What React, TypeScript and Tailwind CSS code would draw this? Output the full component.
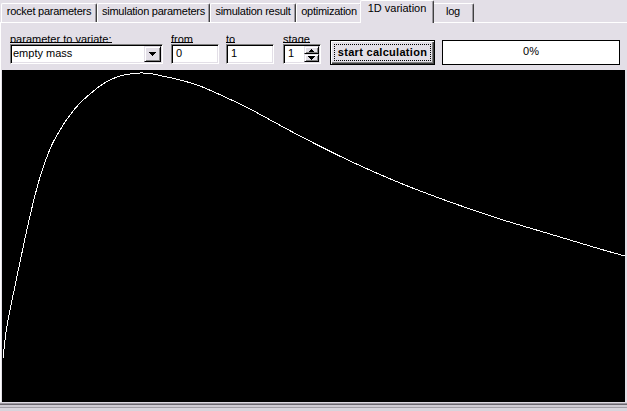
import React from "react";

type Tab = { label: string; cls: string; active?: boolean };

const tabs: Tab[] = [
  { label: "rocket parameters", cls: "w-[96px]" },
  { label: "simulation parameters", cls: "w-[113px]" },
  { label: "simulation result", cls: "w-[86px]" },
  { label: "optimization", cls: "w-[66px]" },
  { label: "1D variation", cls: "w-[74px]", active: true },
  { label: "log", cls: "w-[42px]" },
];

const samples: [number, number][] = [
  [3, 358], [6, 332], [10, 310], [20, 262], [30, 216], [40, 177], [50, 149],
  [60, 130], [70, 115], [80, 103], [90, 94], [100, 86], [110, 80], [120, 76],
  [130, 74], [140, 73], [150, 73.5], [160, 75.5], [180, 80], [200, 86],
  [225, 97], [250, 109], [300, 136], [350, 161], [400, 183], [450, 202],
  [500, 219], [550, 234], [600, 249], [625, 256],
];

function curvePath(pts: [number, number][], ox: number, oy: number) {
  const p = pts.map(([x, y]) => [x - ox, y - oy] as [number, number]);
  let d = `M${p[0][0]},${p[0][1]}`;
  for (let i = 0; i < p.length - 1; i++) {
    const p0 = p[i - 1] ?? p[i];
    const p1 = p[i];
    const p2 = p[i + 1];
    const p3 = p[i + 2] ?? p2;
    const c1x = p1[0] + (p2[0] - p0[0]) / 6;
    const c1y = p1[1] + (p2[1] - p0[1]) / 6;
    const c2x = p2[0] - (p3[0] - p1[0]) / 6;
    const c2y = p2[1] - (p3[1] - p1[1]) / 6;
    d += ` C${c1x},${c1y} ${c2x},${c2y} ${p2[0]},${p2[1]}`;
  }
  return d;
}

const sunken =
  "border border-t-[#808080] border-l-[#808080] border-r-white border-b-white shadow-[inset_1px_1px_0_#000,inset_-1px_-1px_0_#e3dfe7]";
const raised =
  "bg-[#e3dfe7] border border-t-[#e3dfe7] border-l-[#e3dfe7] border-r-black border-b-black shadow-[inset_1px_1px_0_#fff,inset_-1px_-1px_0_#808080]";

function FieldLabel({ text }: { text: string }) {
  return (
    <div className="h-[10px] pt-[1px] mb-[1px] overflow-hidden leading-[10px] border-b border-black whitespace-nowrap">
      {text}
    </div>
  );
}

function Arrow({ dir }: { dir: "up" | "down" }) {
  return dir === "down" ? (
    <svg width="7" height="4" viewBox="0 0 7 4" shapeRendering="crispEdges">
      <path d="M0 0h7v1H0zM1 1h5v1H1zM2 2h3v1H2zM3 3h1v1H3z" fill="#000" />
    </svg>
  ) : (
    <svg width="5" height="3" viewBox="0 0 5 3" shapeRendering="crispEdges">
      <path d="M2 0h1v1H2zM1 1h3v1H1zM0 2h5v1H0z" fill="#000" />
    </svg>
  );
}

export default function App() {
  return (
    <div className="w-[627px] h-[411px] bg-[#e3dfe7] flex flex-col overflow-hidden text-black text-[11px] font-['Liberation_Sans',Arial,sans-serif]">
      {/* tab strip */}
      <div className="h-[22px] flex items-end pl-[1px] relative z-10">
        {tabs.map((t) =>
          t.active ? (
            <div
              key={t.label}
              className={`${t.cls} h-[23px] -mb-[1px] -mx-[2px] relative z-10 bg-[#e3dfe7] border-t border-l border-white border-r border-r-[#404040] shadow-[inset_-1px_0_0_#9c98a0] rounded-tl-[2px] rounded-tr-[2px] flex justify-center pt-[2px] leading-[11px] whitespace-nowrap`}
            >
              {t.label}
            </div>
          ) : (
            <div
              key={t.label}
              className={`${t.cls} h-[19px] border-t border-l border-white border-r border-r-[#404040] shadow-[inset_-1px_0_0_#9c98a0] rounded-tl-[2px] rounded-tr-[2px] flex justify-center pt-[2px] leading-[11px] tracking-[-0.25px] whitespace-nowrap`}
            >
              {t.label}
            </div>
          )
        )}
      </div>

      {/* tab page */}
      <div className="flex flex-col border-t border-l border-white pl-[1px] pr-[2px]">
        <div className="h-[47px] flex items-start">
          <div className="ml-[8px] mt-[10px] flex flex-col items-start">
            <FieldLabel text="parameter to variate:" />
            <div className={`w-[153px] h-[20px] bg-white flex p-[1px] ${sunken}`}>
              <div className="flex-1 pl-[1px] pt-[2px] leading-[11px]">empty mass</div>
              <div className={`w-[17px] h-[16px] flex items-center justify-center ${raised}`}>
                <Arrow dir="down" />
              </div>
            </div>
          </div>

          <div className="ml-[8px] mt-[10px] flex flex-col items-start">
            <FieldLabel text="from" />
            <div className={`w-[48px] h-[20px] bg-white pl-[4px] pt-[3px] leading-[11px] ${sunken}`}>0</div>
          </div>

          <div className="ml-[7px] mt-[10px] flex flex-col items-start">
            <FieldLabel text="to" />
            <div className={`w-[48px] h-[20px] bg-white pl-[4px] pt-[3px] leading-[11px] ${sunken}`}>1</div>
          </div>

          <div className="ml-[9px] mt-[10px] flex flex-col items-start">
            <FieldLabel text="stage" />
            <div className={`w-[38px] h-[20px] bg-white flex p-[1px] ${sunken}`}>
              <div className="flex-1 pl-[3px] pt-[2px] leading-[11px]">1</div>
              <div className="w-[15px] flex flex-col">
                <div className={`h-[8px] flex items-center justify-center ${raised}`}>
                  <Arrow dir="up" />
                </div>
                <div className={`h-[8px] flex items-center justify-center ${raised}`}>
                  <Arrow dir="down" />
                </div>
              </div>
            </div>
          </div>

          <div className="ml-[9px] mt-[17px] w-[105px] h-[25px] border border-black flex bg-[#e3dfe7] shadow-[inset_1px_1px_0_#fff,inset_-1px_-1px_0_#404040,inset_-2px_-2px_0_#808080]">
            <div className="flex-1 m-[3px] border border-dotted border-black flex items-center justify-center font-bold tracking-[0.3px] leading-[11px] whitespace-nowrap">
              start calculation
            </div>
          </div>

          <div className="ml-[7px] mt-[17px] w-[178px] h-[25px] border border-black bg-white flex items-center justify-center pb-[2px] leading-[11px]">
            0%
          </div>
        </div>

        {/* result plot */}
        <svg width="623" height="332" className="block bg-black" viewBox="0 0 623 332">
          <path d={curvePath(samples, 2, 70)} fill="none" stroke="#fff" strokeWidth="1" shapeRendering="crispEdges" />
        </svg>
      </div>

      {/* status edge */}
      <div className="flex flex-col">
        <div className="h-[1px] bg-[#dcd8e0]" />
        <div className="h-[1px] bg-[#9c98a0]" />
        <div className="h-[1px] bg-[#6c6870]" />
        <div className="h-[2px] bg-[#cfcbd3]" />
        <div className="h-[1px] bg-[#a09ca4]" />
        <div className="h-[3px] bg-[#d8d4dc]" />
      </div>
    </div>
  );
}
